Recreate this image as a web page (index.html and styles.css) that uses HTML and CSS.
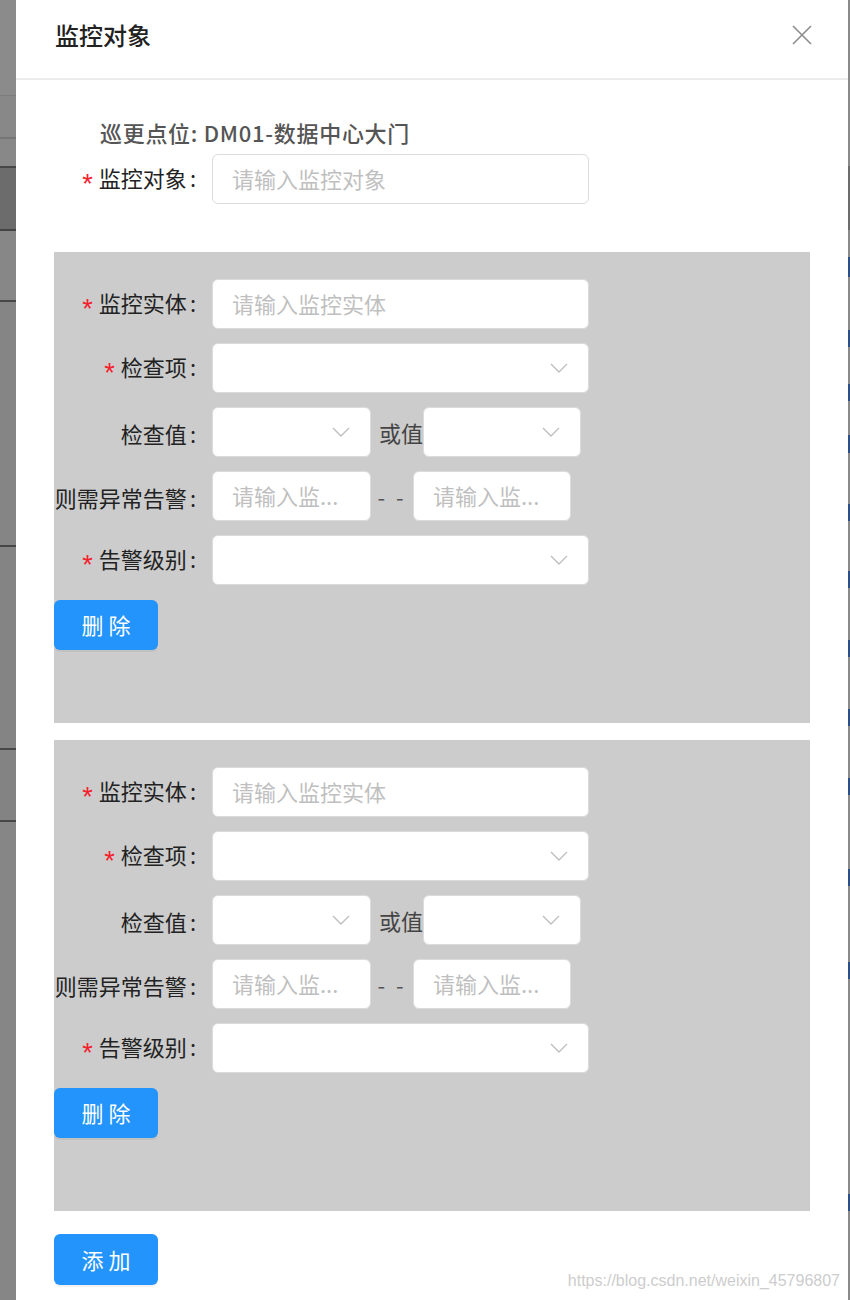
FILE: index.html
```html
<!DOCTYPE html>
<html lang="zh-CN">
<head>
<meta charset="utf-8">
<title>监控对象</title>
<link rel="stylesheet" href="styles.css">
</head>
<body>
<div class="page">
  <div class="backdrop-left"></div>
  <div class="dialog">
    <div class="dialog-header">
      <div class="dialog-title">监控对象</div>
      <svg class="close" width="20" height="20" viewBox="0 0 20 20"><path d="M1 1L19 19M19 1L1 19" stroke="#8f8f8f" stroke-width="1.7" fill="none"/></svg>
    </div>
    <div class="dialog-body">
      <div class="info">巡更点位: DM01-数据中心大门</div>
      <div class="form-row top-row">
        <label class="form-label required">监控对象</label>
        <input class="input w-lg" placeholder="请输入监控对象">
      </div>

      <div class="panel">
        <div class="form-row">
          <label class="form-label required">监控实体</label>
          <input class="input w-lg" placeholder="请输入监控实体">
        </div>
        <div class="form-row">
          <label class="form-label required">检查项</label>
          <div class="select w-lg"><svg width="18" height="10" viewBox="0 0 18 10"><path d="M1 1L9 9L17 1" stroke="#bfbfbf" stroke-width="1.4" fill="none"/></svg></div>
        </div>
        <div class="form-row">
          <label class="form-label">检查值</label>
          <div class="select w-sm"><svg width="18" height="10" viewBox="0 0 18 10"><path d="M1 1L9 9L17 1" stroke="#bfbfbf" stroke-width="1.4" fill="none"/></svg></div>
          <span class="or">或值</span>
          <div class="select w-sm2"><svg width="18" height="10" viewBox="0 0 18 10"><path d="M1 1L9 9L17 1" stroke="#bfbfbf" stroke-width="1.4" fill="none"/></svg></div>
        </div>
        <div class="form-row">
          <label class="form-label">则需异常告警</label>
          <input class="input w-sm" placeholder="请输入监...">
          <span class="dash">- -</span>
          <input class="input w-sm2" placeholder="请输入监...">
        </div>
        <div class="form-row">
          <label class="form-label required">告警级别</label>
          <div class="select w-lg"><svg width="18" height="10" viewBox="0 0 18 10"><path d="M1 1L9 9L17 1" stroke="#bfbfbf" stroke-width="1.4" fill="none"/></svg></div>
        </div>
        <button class="btn del">删 除</button>
      </div>

      <div class="panel">
        <div class="form-row">
          <label class="form-label required">监控实体</label>
          <input class="input w-lg" placeholder="请输入监控实体">
        </div>
        <div class="form-row">
          <label class="form-label required">检查项</label>
          <div class="select w-lg"><svg width="18" height="10" viewBox="0 0 18 10"><path d="M1 1L9 9L17 1" stroke="#bfbfbf" stroke-width="1.4" fill="none"/></svg></div>
        </div>
        <div class="form-row">
          <label class="form-label">检查值</label>
          <div class="select w-sm"><svg width="18" height="10" viewBox="0 0 18 10"><path d="M1 1L9 9L17 1" stroke="#bfbfbf" stroke-width="1.4" fill="none"/></svg></div>
          <span class="or">或值</span>
          <div class="select w-sm2"><svg width="18" height="10" viewBox="0 0 18 10"><path d="M1 1L9 9L17 1" stroke="#bfbfbf" stroke-width="1.4" fill="none"/></svg></div>
        </div>
        <div class="form-row">
          <label class="form-label">则需异常告警</label>
          <input class="input w-sm" placeholder="请输入监...">
          <span class="dash">- -</span>
          <input class="input w-sm2" placeholder="请输入监...">
        </div>
        <div class="form-row">
          <label class="form-label required">告警级别</label>
          <div class="select w-lg"><svg width="18" height="10" viewBox="0 0 18 10"><path d="M1 1L9 9L17 1" stroke="#bfbfbf" stroke-width="1.4" fill="none"/></svg></div>
        </div>
        <button class="btn del">删 除</button>
      </div>

      <button class="btn add">添 加</button>
    </div>
  </div>
  <div class="backdrop-right"></div>
  <div class="watermark">https://blog.csdn.net/weixin_45796807</div>
</div>
</body>
</html>
```

FILE: styles.css
```css
* { box-sizing: border-box; }
html, body { margin: 0; padding: 0; }
body {
  width: 850px;
  height: 1300px;
  overflow: hidden;
  background: #fff;
  font-family: "Noto Sans CJK SC", "Noto Sans", sans-serif;
}
.page {
  position: relative;
  display: flex;
  height: 1300px;
}
.backdrop-left {
  width: 16px;
  flex: none;
  background: linear-gradient(to bottom,
    #8b8b8b 0, #8b8b8b 95px,
    #7c7c7c 95px, #7c7c7c 96px,
    #888 96px, #888 137px,
    #757575 137px, #757575 139px,
    #888 139px, #888 166px,
    #464646 166px, #464646 168px,
    #6c6c6c 168px, #6c6c6c 229px,
    #444 229px, #444 231px,
    #878787 231px, #878787 300px,
    #474747 300px, #474747 302px,
    #858585 302px, #858585 545px,
    #474747 545px, #474747 547px,
    #848484 547px, #848484 748px,
    #474747 748px, #474747 750px,
    #838383 750px, #838383 820px,
    #474747 820px, #474747 822px,
    #868686 822px, #868686 1300px);
}
.backdrop-right {
  width: 2px;
  flex: none;
  background: linear-gradient(to bottom,
    #8a8a8a 0, #8a8a8a 166px,
    #6c6c6c 166px, #6c6c6c 230px,
    #8a8a8a 230px, #8a8a8a 257px,
    #2c4f86 257px, #2c4f86 277px,
    #8a8a8a 277px, #8a8a8a 330px,
    #2c4f86 330px, #2c4f86 347px,
    #8a8a8a 347px, #8a8a8a 384px,
    #2c4f86 384px, #2c4f86 401px,
    #8a8a8a 401px, #8a8a8a 435px,
    #2c4f86 435px, #2c4f86 453px,
    #8a8a8a 453px, #8a8a8a 504px,
    #2c4f86 504px, #2c4f86 521px,
    #8a8a8a 521px, #8a8a8a 571px,
    #2c4f86 571px, #2c4f86 588px,
    #8a8a8a 588px, #8a8a8a 640px,
    #2c4f86 640px, #2c4f86 657px,
    #8a8a8a 657px, #8a8a8a 709px,
    #2c4f86 709px, #2c4f86 726px,
    #8a8a8a 726px, #8a8a8a 778px,
    #2c4f86 778px, #2c4f86 795px,
    #8a8a8a 795px, #8a8a8a 869px,
    #2c4f86 869px, #2c4f86 886px,
    #8a8a8a 886px, #8a8a8a 962px,
    #2c4f86 962px, #2c4f86 979px,
    #8a8a8a 979px, #8a8a8a 1194px,
    #2c4f86 1194px, #2c4f86 1211px,
    #8a8a8a 1211px, #8a8a8a 1300px);
}
.dialog {
  width: 832px;
  flex: none;
  background: #fff;
}
.dialog-header {
  height: 80px;
  border-bottom: 2px solid #ebebeb;
  display: flex;
  align-items: center;
  justify-content: space-between;
  padding: 0 36px 8px 39px;
}
.dialog-title {
  font-size: 24px;
  font-weight: 500;
  color: #222;
  line-height: 1;
}
.close { display: block; }
.dialog-body {
  padding: 0 38px;
}
.info {
  margin-top: 37px;
  padding-left: 46px;
  font-size: 22px;
  font-weight: 500;
  letter-spacing: 0.7px;
  line-height: 30px;
  color: #555;
}
.form-row {
  display: flex;
  align-items: center;
  height: 50px;
}
.top-row { margin-top: 7px; margin-bottom: 48px; }
.form-label {
  width: 158px;
  flex: none;
  text-align: right;
  white-space: nowrap;
  font-size: 22px;
  line-height: 30px;
  color: #222;
  padding-top: 2px;
}
.form-label.required::before {
  content: "*";
  color: #f5222d;
  font-family: "Liberation Sans", sans-serif;
  font-size: 27px;
  margin-right: 6px;
  vertical-align: -6px;
}
.form-label::after {
  content: ":";
  margin: 0 16px 0 3px;
}
.input, .select {
  height: 50px;
  flex: none;
  background: #fff;
  border: 1px solid #dcdcdc;
  border-radius: 6px;
  padding: 0 19px 2px;
  font-family: inherit;
  font-size: 22px;
  color: #333;
  outline: none;
}
.input::placeholder { color: #bfbfbf; }
.select {
  display: flex;
  align-items: center;
  justify-content: flex-end;
  padding: 0 20px 0 19px;
}
.select svg { display: block; }
.w-lg { width: 377px; }
.w-sm { width: 159px; }
.w-sm2 { width: 158px; }
.or {
  width: 52px;
  flex: none;
  padding-left: 8px;
  font-size: 22px;
  color: #444;
}
.dash {
  width: 42px;
  flex: none;
  text-align: center;
  font-size: 22px;
  letter-spacing: 3px;
  color: #555;
}
.panel {
  background: #cccccc;
  padding: 27px 0 73px;
  display: flex;
  flex-direction: column;
  gap: 14px;
}
.panel + .panel { margin-top: 17px; }
.btn {
  display: block;
  width: 104px;
  height: 50px;
  border: none;
  border-radius: 6px;
  background: #2394fb;
  color: #fff;
  font-family: inherit;
  font-size: 22px;
  padding: 0 0 2px;
  box-shadow: 0 2px 0 rgba(0, 0, 0, 0.05);
}
.del { margin-top: 1px; }
.add { margin-top: 23px; height: 51px; }
.watermark {
  position: absolute;
  right: 10px;
  top: 1272px;
  font-family: "Liberation Sans", sans-serif;
  font-size: 16px;
  color: #cdcdcd;
  white-space: nowrap;
}
```
